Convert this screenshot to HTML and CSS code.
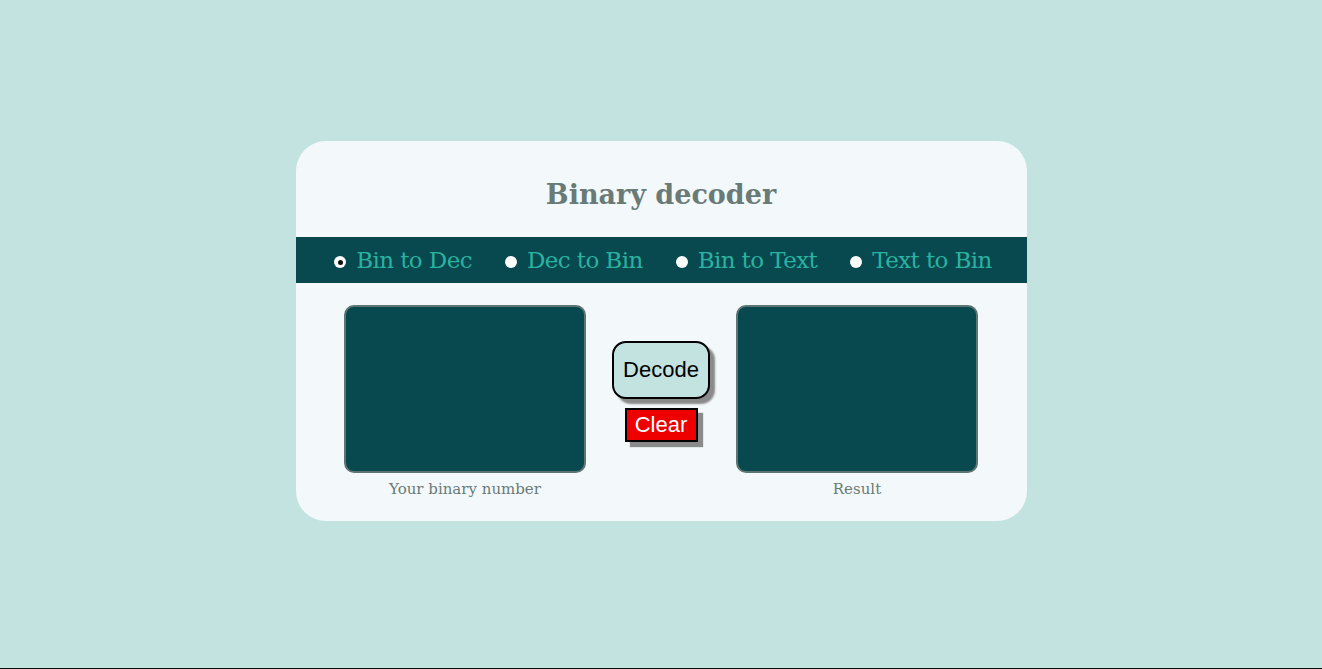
FILE: index.html
```html
<!DOCTYPE html>
<html lang="en">
<head>
<meta charset="utf-8">
<title>Binary decoder</title>
<link rel="stylesheet" href="styles.css">
</head>
<body>
<main class="card">
  <h1 class="title">Binary decoder</h1>
  <div class="modes">
    <label class="mode"><span class="radio checked"></span><span class="mode-text">Bin to Dec</span></label>
    <label class="mode"><span class="radio"></span><span class="mode-text">Dec to Bin</span></label>
    <label class="mode"><span class="radio"></span><span class="mode-text">Bin to Text</span></label>
    <label class="mode"><span class="radio"></span><span class="mode-text">Text to Bin</span></label>
  </div>
  <div class="work">
    <div class="field">
      <div class="box"></div>
      <div class="caption">Your binary number</div>
    </div>
    <div class="actions">
      <button class="decode">Decode</button>
      <button class="clear">Clear</button>
    </div>
    <div class="field">
      <div class="box"></div>
      <div class="caption">Result</div>
    </div>
  </div>
</main>
<div class="edge"></div>
</body>
</html>
```
FILE: styles.css
```css
html, body {
  margin: 0;
  padding: 0;
}
body {
  background: #c3e3e1;
  height: 669px;
  overflow: hidden;
  padding-top: 141px;
  box-sizing: border-box;
  font-family: "DejaVu Serif", serif;
}
.card {
  width: 731px;
  height: 380px;
  margin: 0 auto;
  background: #f3f9fb;
  border-radius: 30px;
  box-sizing: border-box;
  overflow: hidden;
}
.title {
  margin: 0;
  height: 96px;
  line-height: 108px;
  text-align: center;
  font-size: 27px;
  font-weight: bold;
  color: #6a7a77;
}
.modes {
  height: 46px;
  background: #08494f;
  display: flex;
  justify-content: center;
  align-items: center;
  gap: 33px;
  padding-left: 4px;
}
.mode {
  display: flex;
  align-items: center;
  gap: 10px;
}
.radio {
  width: 12px;
  height: 12px;
  border-radius: 50%;
  background: #fff;
  box-sizing: border-box;
  margin-top: 4px;
  position: relative;
}
.radio.checked::after {
  content: "";
  position: absolute;
  left: 3.5px;
  top: 3.5px;
  width: 5px;
  height: 5px;
  border-radius: 50%;
  background: #111;
}
.mode-text {
  font-size: 23px;
  color: #2ab2a0;
  line-height: 46px;
  letter-spacing: -0.6px;
}
.work {
  display: flex;
  justify-content: center;
  gap: 26px;
  padding-top: 22px;
}
.field {
  width: 242px;
  display: flex;
  flex-direction: column;
  align-items: center;
}
.box {
  width: 242px;
  height: 168px;
  box-sizing: border-box;
  background: #08494f;
  border: 2px solid #5f7572;
  border-radius: 10px;
}
.caption {
  margin-top: 6px;
  font-size: 15px;
  line-height: 20px;
  color: #6a7a77;
}
.actions {
  width: 98px;
  display: flex;
  flex-direction: column;
  align-items: center;
  padding-top: 36px;
}
.decode {
  width: 98px;
  height: 58px;
  box-sizing: border-box;
  background: #c3e3e1;
  border: 2px solid #000;
  border-radius: 14px;
  box-shadow: 5px 5px 2px #8a8a8a;
  font-family: "Liberation Sans", Arial, sans-serif;
  font-size: 22px;
  color: #000;
  padding: 0;
}
.clear {
  margin-top: 9px;
  width: 73px;
  height: 34px;
  box-sizing: border-box;
  background: #ee0000;
  border: 2px solid #000;
  border-radius: 0;
  box-shadow: 5px 5px 1px #8a8a8a;
  font-family: "Liberation Sans", Arial, sans-serif;
  font-size: 22px;
  color: #fff;
  padding: 0;
  line-height: 28px;
}
.edge {
  position: fixed;
  left: 0;
  right: 0;
  bottom: 0;
  height: 1px;
  background: #0d0f0e;
}
```
